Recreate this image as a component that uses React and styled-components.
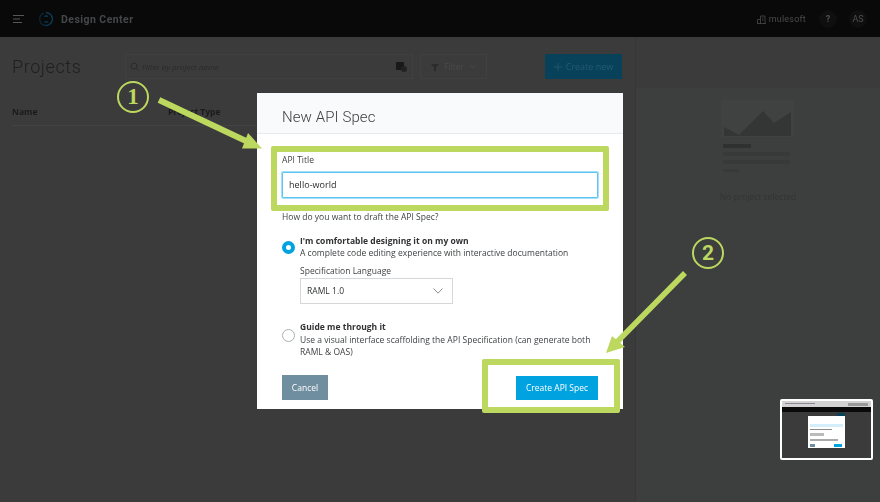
import React from "react";
import styled, { createGlobalStyle } from "styled-components";

const Global = createGlobalStyle`
  html, body { margin: 0; padding: 0; background: #3b3b3b; }
  * { box-sizing: border-box; }
`;

const Page = styled.div`
  position: relative;
  width: 880px;
  height: 502px;
  overflow: hidden;
  display: flex;
  flex-direction: column;
  background: #3b3b3b;
  font-family: "Open Sans", sans-serif;
`;

const TopBar = styled.header`
  height: 37px;
  flex: none;
  background: #090909;
  display: flex;
  align-items: center;
  padding: 1px 13px 0 13px;
  filter: blur(0.4px);
`;
const Brand = styled.div`
  font-family: "Roboto", sans-serif;
  font-weight: 700;
  font-size: 10.5px;
  letter-spacing: 0.45px;
  color: #45484a;
  margin-left: 7px;
`;
const Spacer = styled.div`
  flex: 1;
`;
const Org = styled.div`
  display: flex;
  align-items: center;
  gap: 3px;
  font-family: "Roboto", sans-serif;
  font-size: 9px;
  letter-spacing: 0.2px;
  color: #4a4a4a;
  margin-right: 13px;
`;
const Round = styled.div`
  width: 18px;
  height: 18px;
  border-radius: 50%;
  background: #0f0f0f;
  color: #4f4f4f;
  font-family: "Roboto", sans-serif;
  font-size: 9px;
  font-weight: ${p => (p.$bold ? 700 : 400)};
  display: flex;
  align-items: center;
  justify-content: center;
  margin-left: ${p => p.$gap || 0}px;
`;

const Body = styled.div`
  flex: 1;
  display: flex;
  filter: blur(0.4px);
`;
const Main = styled.main`
  width: 636px;
  flex: none;
  padding: 17px 13px 0 12px;
  border-right: 1px solid #363636;
`;
const Toolbar = styled.div`
  display: flex;
  align-items: center;
`;
const Title = styled.h1`
  margin: 0;
  width: 113px;
  font-family: "Roboto", sans-serif;
  font-weight: 300;
  font-size: 18px;
  letter-spacing: 0.6px;
  color: #1f1f1f;
`;
const Search = styled.div`
  width: 288px;
  height: 25px;
  border: 1px solid #404040;
  display: flex;
  align-items: center;
  padding: 0 5px 0 4px;
  gap: 3px;
  font-size: 8px;
  font-style: italic;
  color: #2a2a2a;
`;
const FilterButton = styled.div`
  width: 67px;
  height: 25px;
  margin-left: 7px;
  border: 1px solid #404040;
  display: flex;
  align-items: center;
  justify-content: center;
  gap: 5px;
  font-size: 8.5px;
  color: #4a4a4a;
`;
const CreateButton = styled.div`
  width: 77px;
  height: 25px;
  margin-left: auto;
  background: #07415a;
  color: #265a70;
  font-size: 9px;
  display: flex;
  align-items: center;
  justify-content: center;
  gap: 4px;
`;
const HeadRow = styled.div`
  display: flex;
  margin-top: 27px;
  padding-bottom: 8px;
  border-bottom: 1px solid #434343;
  font-size: 8.5px;
  font-weight: 700;
  color: #1b1b1b;
`;
const HeadCell = styled.div`
  width: ${p => p.$w}px;
`;

const Aside = styled.aside`
  flex: 1;
  background: linear-gradient(#3b3b3b 51px, #3d3f3e 51px);
  display: flex;
  flex-direction: column;
  align-items: center;
  padding-top: 63px;
  font-size: 8.5px;
  color: #333;
`;
const Placeholder = styled.svg`
  display: block;
  margin-bottom: 17px;
`;

const Modal = styled.section`
  position: absolute;
  left: 257px;
  top: 93px;
  width: 366px;
  height: 316px;
  background: #fff;
  color: #3c3f42;
  filter: blur(0.25px);
`;
const ModalHead = styled.div`
  height: 41px;
  background: #f9fafb;
  border-bottom: 1px solid #e8eaec;
  padding: 14px 0 0 25px;
  font-family: "Roboto", sans-serif;
  font-weight: 300;
  font-size: 15px;
  letter-spacing: 0.1px;
  line-height: 20px;
  color: #3c4043;
`;
const ModalBody = styled.div`
  padding: 20px 25px 0 25px;
  font-size: 8.5px;
  line-height: 12px;
  letter-spacing: 0.02px;
`;
const Label = styled.label`
  display: block;
  font-size: 8.5px;
  line-height: 12px;
`;
const TitleInput = styled.div`
  height: 26px;
  margin-top: 6px;
  border: 1px solid #5cc4f0;
  box-shadow: 0 0 0 1px #a5e0f8;
  border-radius: 1px;
  padding-left: 6px;
  font-size: 9px;
  line-height: 24px;
  color: #2b2b2b;
`;
const Question = styled.p`
  margin: 13px 0 0;
`;
const Option = styled.div`
  display: flex;
  margin-top: ${p => p.$top}px;
`;
const Radio = styled.span`
  flex: none;
  width: 13px;
  height: 13px;
  border-radius: 50%;
  margin: ${p => p.$mt}px 5px 0 0;
  background: #fff;
  border: ${p => (p.$on ? "4px solid #00a2df" : "1px solid #a9b0b5")};
`;
const OptionText = styled.div`
  flex: 1;
`;
const OptionTitle = styled.div`
  font-weight: 700;
  color: #2f3133;
  margin-bottom: ${p => p.$gap || 0}px;
`;
const SpecLabel = styled.div`
  margin-top: 6px;
`;
const SelectBox = styled.div`
  width: 153px;
  height: 26px;
  margin-top: 1px;
  border: 1px solid #d4d8db;
  display: flex;
  align-items: center;
  justify-content: space-between;
  padding: 0 9px 0 6px;
  font-size: 8.5px;
  color: #2f3133;
`;
const Footer = styled.div`
  display: flex;
  justify-content: space-between;
  align-items: center;
  margin-top: 17px;
`;
const Button = styled.button`
  border: 0;
  padding: 0;
  height: ${p => p.$h}px;
  width: ${p => p.$w}px;
  background: ${p => p.$bg};
  color: #fff;
  font-family: "Open Sans", sans-serif;
  font-size: 8.5px;
`;

const Frame = styled.div`
  position: absolute;
  left: ${p => p.$x}px;
  top: ${p => p.$y}px;
  width: ${p => p.$w}px;
  height: ${p => p.$h}px;
  border: 6px solid #bcd85f;
  border-radius: 2px;
`;
const Badge = styled.div`
  position: absolute;
  left: ${p => p.$x}px;
  top: ${p => p.$y}px;
  width: 32px;
  height: 32px;
  border-radius: 50%;
  border: 2px solid #bcd85f;
  color: #bcd85f;
  font-family: ${p => p.$font};
  font-weight: 700;
  font-size: ${p => p.$size}px;
  display: flex;
  align-items: center;
  justify-content: center;
`;
const Overlay = styled.svg`
  position: absolute;
  left: 0;
  top: 0;
  pointer-events: none;
`;
const Thumb = styled.svg`
  position: absolute;
  left: 780px;
  top: 399px;
  filter: blur(0.5px);
`;

function MenuIcon() {
  return (
    <svg width="12" height="10" viewBox="0 0 12 10" fill="none" stroke="#55585a" strokeWidth="1">
      <path d="M0 1.500h11M0 5h7M0 8.500h9" />
    </svg>
  );
}

function Logo() {
  return (
    <svg width="16" height="16" viewBox="0 0 16 16" fill="none" strokeWidth="1.3" style={{ marginLeft: 13 }}>
      <path d="M8 1.500a6.500 6.500 0 1 1-2 12.700" stroke="#0a3f58" />
      <path d="M8 14.500A6.500 6.500 0 0 1 6 1.900" stroke="#082735" />
      <path d="M6.500 5.500a3 3 0 0 1 3.600 0M6.500 10.500a3 3 0 0 0 3.600 0" stroke="#0a3f58" />
    </svg>
  );
}

export default function App() {
  return (
    <Page>
      <Global />
      <TopBar>
        <MenuIcon />
        <Logo />
        <Brand>Design Center</Brand>
        <Spacer />
        <Org>
          <svg width="9" height="9" viewBox="0 0 9 9" fill="none" stroke="#4a4a4a" strokeWidth="0.8">
            <path d="M3.500 8.500V1h4.500v7.500M0.500 8.500V4.500h3M0 8.500h9M5 3h1.500M5 5h1.500" />
          </svg>
          mulesoft
        </Org>
        <Round $bold>?</Round>
        <Round $gap={12}>AS</Round>
      </TopBar>
      <Body>
        <Main>
          <Toolbar>
            <Title>Projects</Title>
            <Search>
              <svg width="9" height="9" viewBox="0 0 9 9" fill="none" stroke="#2a2a2a" strokeWidth="1">
                <circle cx="4" cy="4" r="3" />
                <path d="M6.200 6.200L8.500 8.500" />
              </svg>
              Filter by project name
              <Spacer />
              <svg width="11" height="11" viewBox="0 0 11 11">
                <rect x="0" y="1" width="8" height="8" rx="1" fill="#191919" />
                <circle cx="8" cy="8" r="3" fill="#222" />
              </svg>
            </Search>
            <FilterButton>
              <svg width="8" height="8" viewBox="0 0 8 8" fill="#2b2b2b">
                <path d="M0 1h8L5 4.500V8H3V4.500z" />
              </svg>
              Filter
              <svg width="7" height="5" viewBox="0 0 7 5" fill="none" stroke="#4a4a4a" strokeWidth="0.8">
                <path d="M1 1l2.500 3L6 1" />
              </svg>
            </FilterButton>
            <CreateButton>
              <svg width="8" height="8" viewBox="0 0 8 8" stroke="#265a70" strokeWidth="0.8">
                <path d="M4 0v8M0 4h8" />
              </svg>
              Create new
            </CreateButton>
          </Toolbar>
          <HeadRow>
            <HeadCell $w={156}>Name</HeadCell>
            <HeadCell $w={100}>Project Type</HeadCell>
          </HeadRow>
        </Main>
        <Aside>
          <Placeholder width="74" height="74" viewBox="0 0 74 74">
            <rect x="0" y="0" width="73" height="37" fill="#404241" />
            <path d="M3 27l15 8 24-24 11 12 17-11v24H3z" fill="#343635" />
            <rect x="2" y="44" width="28" height="4" fill="#2f3130" />
            <rect x="2" y="52" width="67" height="4" fill="#383a39" />
            <rect x="2" y="60" width="67" height="4" fill="#383a39" />
            <rect x="2" y="69" width="16" height="3" fill="#383a39" />
          </Placeholder>
          No project selected
        </Aside>
      </Body>

      <Modal>
        <ModalHead>New API Spec</ModalHead>
        <ModalBody>
          <Label>API Title</Label>
          <TitleInput>hello-world</TitleInput>
          <Question>How do you want to draft the API Spec?</Question>
          <Option $top={12}>
            <Radio $on $mt={6} />
            <OptionText>
              <OptionTitle>I'm comfortable designing it on my own</OptionTitle>
              <div>A complete code editing experience with interactive documentation</div>
              <SpecLabel>Specification Language</SpecLabel>
              <SelectBox>
                RAML 1.0
                <svg width="10" height="6" viewBox="0 0 10 6" fill="none" stroke="#6b7176" strokeWidth="0.8">
                  <path d="M0.500 0.500L5 5.200l4.500-4.700" />
                </svg>
              </SelectBox>
            </OptionText>
          </Option>
          <Option $top={17}>
            <Radio $mt={8} />
            <OptionText>
              <OptionTitle $gap={1}>Guide me through it</OptionTitle>
              <div>Use a visual interface scaffolding the API Specification (can generate both RAML &amp; OAS)</div>
            </OptionText>
          </Option>
          <Footer>
            <Button $w={46} $h={25} $bg="#6f8e9f">Cancel</Button>
            <Button $w={82} $h={24} $bg="#00a2df">Create API Spec</Button>
          </Footer>
        </ModalBody>
      </Modal>

      <Frame $x={271} $y={146} $w={338} $h={65} />
      <Frame $x={482} $y={359} $w={138} $h={54} />
      <Badge $x={117} $y={81} $size={23} $font={'"Liberation Serif", serif'}>1</Badge>
      <Badge $x={692} $y={237} $size={21} $font={'"Roboto", sans-serif'}>2</Badge>
      <Overlay width="880" height="502" viewBox="0 0 880 502">
        <path d="M159 100L246 141" stroke="#bcd85f" strokeWidth="6" />
        <path d="M262 148.500L242 148.500L248 133z" fill="#bcd85f" />
        <path d="M685 273L617 342" stroke="#bcd85f" strokeWidth="5.500" />
        <path d="M606 353L612 336L625 347z" fill="#bcd85f" />
      </Overlay>

      <Thumb width="93" height="61" viewBox="0 0 93 61">
        <rect x="1" y="1" width="91" height="59" rx="1" fill="#3b3b3b" stroke="#fff" strokeWidth="2" />
        <rect x="2" y="2" width="89" height="6" fill="#d2d2d2" />
        <rect x="5" y="4" width="30" height="1" fill="#8d8494" />
        <rect x="68" y="4" width="20" height="3" fill="#9a9a9a" />
        <rect x="2" y="8" width="89" height="5" fill="#0a0a0a" />
        <rect x="57" y="14" width="8" height="3" fill="#07415a" />
        <rect x="28" y="17" width="37" height="32" fill="#fff" />
        <rect x="30" y="25" width="33" height="3" fill="#d5effa" />
        <rect x="30" y="30" width="22" height="1" fill="#8a8a8a" />
        <rect x="30" y="34" width="14" height="3" fill="#bbb" />
        <rect x="30" y="40" width="28" height="2" fill="#aaa" />
        <rect x="30" y="45" width="5" height="3" fill="#6f8e9f" />
        <rect x="54" y="45" width="8" height="3" fill="#00a2df" />
      </Thumb>
    </Page>
  );
}
